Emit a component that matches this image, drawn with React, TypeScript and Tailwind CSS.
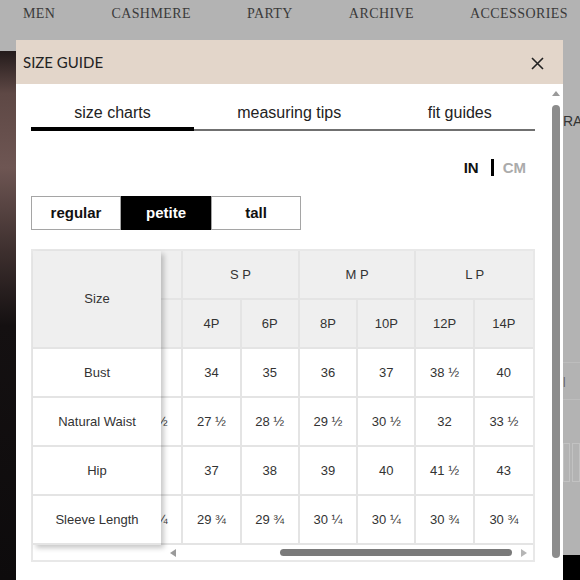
import React from "react";

const navItems = ["MEN", "CASHMERE", "PARTY", "ARCHIVE", "ACCESSORIES"];
const tabs = ["size charts", "measuring tips", "fit guides"];
const fits = ["regular", "petite", "tall"];

// first column group is scrolled almost out of view
const groups = [
    { label: "", span: "col-span-1" },
    { label: "S P", span: "col-span-2" },
    { label: "M P", span: "col-span-2" },
    { label: "L P", span: "col-span-2" },
];
const sizes = ["2P", "4P", "6P", "8P", "10P", "12P", "14P"];

const rows = [
    { label: "Bust", values: ["33", "34", "35", "36", "37", "38 ½", "40"] },
    { label: "Natural Waist", values: ["26 ½", "27 ½", "28 ½", "29 ½", "30 ½", "32", "33 ½"] },
    { label: "Hip", values: ["36", "37", "38", "39", "40", "41 ½", "43"] },
    { label: "Sleeve Length", values: ["29 ¼", "29 ¾", "29 ¾", "30 ¼", "30 ¼", "30 ¾", "30 ¾"] },
];

const cell = "h-[49px] flex items-center justify-center border-b-2 border-[#e4e4e4]";

const SizeTable = () => (
    <div className="mt-[19px] w-[504px] border-2 border-[#e8e8e8] text-[13px] text-[#333]">
        <div className="flex">
            {/* sticky first column */}
            <div className="relative z-10 w-[128px] shrink-0 bg-white shadow-[3px_3px_5px_rgba(0,0,0,0.22)]">
                <div className="h-[98px] flex items-center justify-center bg-[#efefef] border-b-2 border-[#e4e4e4]">Size</div>
                {rows.map((r) => (
                    <div key={r.label} className={cell}>{r.label}</div>
                ))}
            </div>
            {/* scrolled part */}
            <div className="flex-1 overflow-hidden">
                <div className="ml-[-36px] w-[408px] grid grid-cols-7">
                    {groups.map((g, i) => (
                        <div key={i} className={`${g.span} ${cell} bg-[#efefef] ${i < 3 ? "border-r-2" : ""}`}>{g.label}</div>
                    ))}
                    {sizes.map((s, i) => (
                        <div key={s} className={`${cell} bg-[#efefef] ${i < 6 ? "border-r-2" : ""}`}>{s}</div>
                    ))}
                    {rows.map((r) =>
                        r.values.map((v, i) => (
                            <div key={r.label + i} className={`${cell} bg-white ${i < 6 ? "border-r-2" : ""}`}>{v}</div>
                        ))
                    )}
                </div>
            </div>
        </div>
        {/* horizontal scrollbar */}
        <div className="flex h-[15px] items-center">
            <div className="w-[128px] shrink-0" />
            <div className="flex flex-1 items-center pl-[9px] pr-[6px]">
                <div className="w-0 h-0 border-y-[4px] border-y-transparent border-r-[6px] border-r-[#9a9a9a]" />
                <div className="flex-1" />
                <div className="w-[232px] h-[7px] rounded-full bg-[#7a7a7a]" />
                <div className="ml-[9px] w-0 h-0 border-y-[4px] border-y-transparent border-l-[6px] border-l-[#b5b5b5]" />
            </div>
        </div>
    </div>
);

const App = () => {
    return (
        <div className="relative w-[580px] h-[580px] overflow-hidden bg-[#b3b3b3]" style={{ fontFamily: "'Liberation Sans', Arial, sans-serif" }}>
            {/* page behind the overlay */}
            <nav className="h-[40px] flex gap-[56px] pl-[23px] pt-[6px] whitespace-nowrap text-[14px] leading-[16px] tracking-[0.03em] text-[#3a3a3a] font-['Liberation_Serif',serif]">
                {navItems.map((n) => (
                    <span key={n}>{n}</span>
                ))}
            </nav>
            <div className="flex h-[540px]">
                <div className="w-[16px] mt-[11px] bg-[linear-gradient(180deg,#241b1b_0%,#5e4845_8%,#6e5653_22%,#3d2f2e_38%,#141011_52%,#0d0b0c_100%)]" />
                <div className="flex-1" />
                <div className="w-[17px] flex flex-col overflow-hidden">
                    <div className="pt-[73px] text-[14px] leading-[16px] text-[#333] whitespace-nowrap">RA</div>
                    <div className="mt-[233px] h-[38px] flex items-center border-y border-[#bdbdbd] text-[10px] text-[#555]">|</div>
                    <div className="mt-[43px] h-[39px] flex gap-[2px]">
                        <div className="w-[7px] border border-[#c2c2c2]" />
                        <div className="w-[8px] border border-[#c2c2c2]" />
                    </div>
                    <div className="mt-[73px] flex-1 bg-black" />
                </div>
            </div>

            {/* modal */}
            <div className="absolute left-[16px] top-[40px] w-[547px] h-[540px] bg-white flex flex-col overflow-hidden">
                <div className="h-[44px] shrink-0 flex items-center justify-between bg-[#e3d6ca] pl-[7px] pr-[19px]">
                    <span className="text-[15px] text-[#222] font-['Lato',sans-serif]">SIZE GUIDE</span>
                    <svg width="13" height="13" viewBox="0 0 13 13" className="mt-[3px]">
                        <path d="M1 1 L12 12 M12 1 L1 12" stroke="#222" strokeWidth="1.6" />
                    </svg>
                </div>
                <div className="flex flex-1">
                    <div className="flex-1 pl-[15px]">
                        {/* tabs */}
                        <div className="w-[504px] flex pt-[20px] text-[16px] leading-[18px] text-[#222]">
                            {tabs.map((t, i) => (
                                <div
                                    key={t}
                                    className={`flex-auto text-center pb-[5px] ${i === 0 ? "border-b-4 border-black" : "border-b-2 border-[#707070]"}`}
                                >
                                    {t}
                                </div>
                            ))}
                        </div>
                        {/* units */}
                        <div className="w-[504px] mt-[28px] flex justify-end items-center pr-[9px] text-[15px] leading-[17px] font-bold">
                            <span className="text-[#111]">IN</span>
                            <span className="ml-[12px] w-[3px] h-[17px] bg-black" />
                            <span className="ml-[9px] text-[#ababab]">CM</span>
                        </div>
                        {/* fit buttons */}
                        <div className="mt-[20px] flex">
                            {fits.map((f) => (
                                <div
                                    key={f}
                                    className={`w-[90px] h-[34px] flex items-center justify-center text-[15px] font-bold border ${
                                        f === "petite" ? "bg-black text-white border-black" : "bg-white text-[#111] border-[#a5a5a5]"
                                    }`}
                                >
                                    {f}
                                </div>
                            ))}
                        </div>
                        <SizeTable />
                    </div>
                    {/* modal scrollbar */}
                    <div className="w-[12px] shrink-0 flex flex-col items-center pt-[7px] pr-[2px]">
                        <div className="w-0 h-0 border-x-[4px] border-x-transparent border-b-[5px] border-b-[#9a9a9a]" />
                        <div className="mt-[9px] w-[8px] h-[453px] rounded-full bg-[#8c8c8c]" />
                    </div>
                </div>
            </div>
        </div>
    );
};

export default App;
